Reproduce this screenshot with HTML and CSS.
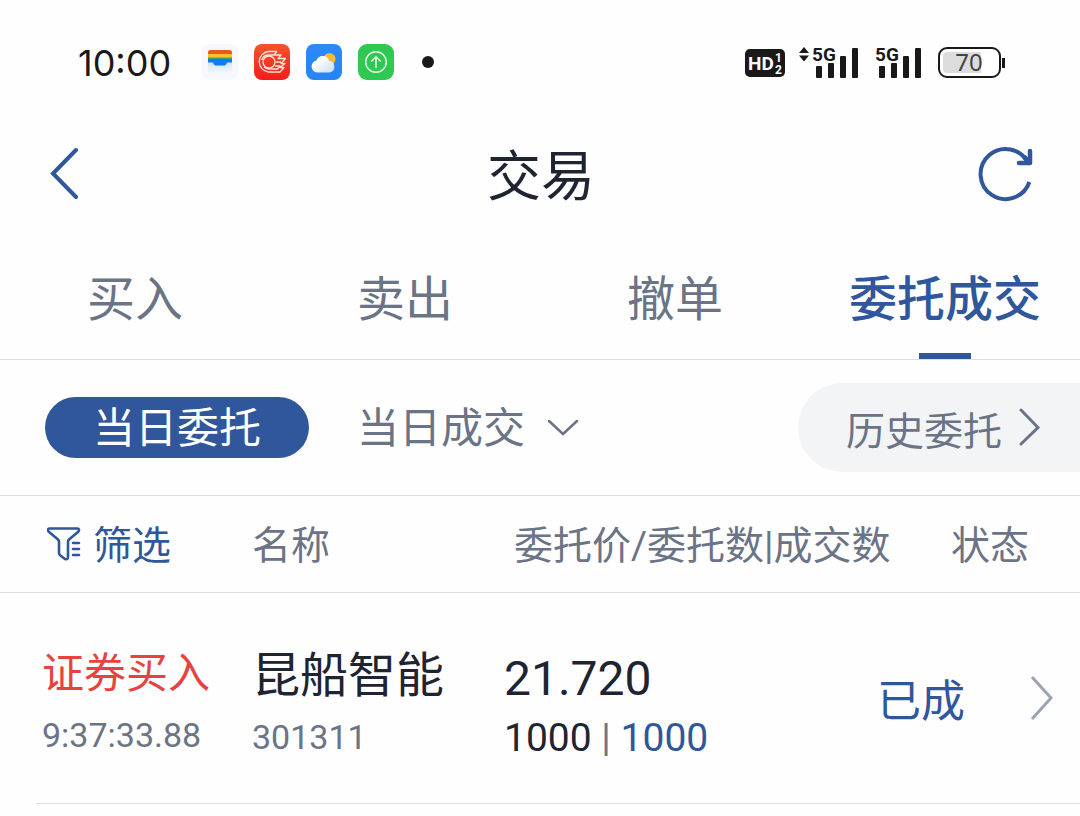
FILE: index.html
```html
<!DOCTYPE html>
<html lang="zh-CN">
<head>
<meta charset="utf-8">
<meta name="viewport" content="width=device-width, initial-scale=1">
<title>交易</title>
<link rel="stylesheet" href="styles.css">
</head>
<body>
<div class="status">
  <time class="clock">10:00</time>
  <div class="apps">
    <svg width="36" height="36" viewBox="0 0 36 36" aria-hidden="true">
      <defs><linearGradient id="fade" x1="0" y1="0" x2="0" y2="1"><stop offset="0" stop-color="#cfe3fb"/><stop offset="1" stop-color="#f7f9fe"/></linearGradient></defs>
      <rect width="36" height="36" rx="8" fill="#f7f8fd"/>
      <path d="M6 17h24v13H6z" fill="url(#fade)"/>
      <path d="M6 11V8.500q0-2.500 2.500-2.500h19q2.500 0 2.500 2.500V11z" fill="#ea5b1a"/>
      <path d="M6 10h24v5H6z" fill="#fbc02a"/>
      <path d="M6 13.500h24V16H6z" fill="#3f9f78"/>
      <path d="M6 15h24v3.500h-4q-1 0-1.500 1l-.5 1q-.500 1-2 1h-8q-1.500 0-2-1l-.5-1q-.5-1-1.500-1H6z" fill="#0d7cf2"/>
    </svg>
    <svg width="36" height="36" viewBox="0 0 36 36" aria-hidden="true">
      <defs><linearGradient id="red" x1="0" y1="0" x2="0" y2="1"><stop offset="0" stop-color="#f4552c"/><stop offset="1" stop-color="#f51d1d"/></linearGradient></defs>
      <rect width="36" height="36" rx="8" fill="url(#red)"/>
      <g fill="none" stroke="#ffe3dc" stroke-width="1.300" stroke-linejoin="round">
        <circle cx="15" cy="18" r="6"/>
        <path d="M23 7.500H14.500A10.300 10.300 0 0 0 14.500 28H26l4-4.500h-4l5-4h-4l4.500-5h-8M23 7.500 20 11h7l-3 3.500M20 11h-5a7.500 7.500 0 0 0-7.300 5M22 18h5M21 22h5l-2.500 3H15a7.500 7.500 0 0 1-5-2"/>
      </g>
    </svg>
    <svg width="36" height="36" viewBox="0 0 36 36" aria-hidden="true">
      <defs><linearGradient id="cloud" x1="0" y1="0" x2="1" y2="1"><stop offset=".3" stop-color="#fff"/><stop offset="1" stop-color="#c5ddfb"/></linearGradient>
      <linearGradient id="sky" x1="0" y1="0" x2="0" y2="1"><stop offset="0" stop-color="#2b8af6"/><stop offset="1" stop-color="#2585f3"/></linearGradient></defs>
      <rect width="36" height="36" rx="8" fill="url(#sky)"/>
      <circle cx="23.500" cy="15" r="6" fill="#f8bd38"/>
      <path d="M11.500 28.500a6 6 0 0 1-1-11.900 6.500 6.500 0 0 1 12.500.4 5.800 5.800 0 0 1 .5 11.500z" fill="url(#cloud)"/>
    </svg>
    <svg width="36" height="36" viewBox="0 0 36 36" aria-hidden="true">
      <rect width="36" height="36" rx="9" fill="#2fc850"/>
      <g fill="none" stroke="#e5ffe9" stroke-width="1.500" stroke-linecap="round" stroke-linejoin="round"><circle cx="18" cy="18" r="10.300"/><path d="M18 23.500V13M13.500 17.200 18 12.700l4.500 4.500"/></g>
    </svg>
    <span class="dot"></span>
  </div>
  <div class="signals">
    <svg width="40" height="28" viewBox="0 0 40 28" role="img" aria-label="HD">
      <rect width="40" height="28" rx="5" fill="#191919"/>
      <g fill="#fff" font-family="Roboto, sans-serif" font-weight="700"><text x="3" y="21" font-size="19">HD</text><text x="30" y="13" font-size="12">1</text><text x="30" y="25" font-size="12">2</text></g>
    </svg>
    <svg class="cell-one" width="60" height="38" viewBox="0 0 60 38" role="img" aria-label="5G">
      <path d="M0 9 5 3l5 6zM0 11.500h10l-5 6z" fill="#191919"/>
      <text x="13" y="17" font-size="19" font-family="Roboto, sans-serif" font-weight="700" fill="#191919">5G</text>
      <g fill="#191919"><rect x="17" y="22" width="6" height="12" rx="1"/><rect x="29" y="19" width="6" height="15" rx="1"/><rect x="41" y="12" width="6" height="22" rx="1"/><rect x="53" y="4" width="6" height="30" rx="1"/></g>
    </svg>
    <svg class="cell-two" width="48" height="38" viewBox="0 0 48 38" role="img" aria-label="5G">
      <text x="0" y="17" font-size="19" font-family="Roboto, sans-serif" font-weight="700" fill="#191919">5G</text>
      <g fill="#191919"><rect x="4" y="22" width="6" height="12" rx="1"/><rect x="16" y="19" width="6" height="15" rx="1"/><rect x="28" y="12" width="6" height="22" rx="1"/><rect x="40" y="4" width="6" height="30" rx="1"/></g>
    </svg>
    <svg class="battery" width="68" height="36" viewBox="0 0 68 36" role="img" aria-label="70%">
      <rect x="1" y="3" width="61" height="29" rx="8" fill="#fff" stroke="#191919" stroke-width="2"/>
      <path d="M9 7h34v21H9q-4 0-4-4V11q0-4 4-4z" fill="#dcdcdc"/>
      <path d="M65.500 13v10" stroke="#191919" stroke-width="3"/>
      <text x="31" y="26" font-size="24" text-anchor="middle" font-family="'Noto Sans', sans-serif" fill="#444">70</text>
    </svg>
  </div>
</div>

<header class="header">
  <button class="icon-button" type="button" aria-label="返回">
    <svg width="30" height="54" viewBox="0 0 30 54" fill="none" stroke="#30569b" stroke-width="4" stroke-linecap="round"><path d="M28 4 5 27.500 28 51"/></svg>
  </button>
  <h1 class="title">交易</h1>
  <button class="icon-button" type="button" aria-label="刷新">
    <svg width="58" height="58" viewBox="0 0 58 58" fill="none" stroke="#30569b" stroke-width="4"><path d="M53.300 38A25 25 0 1 1 52 19"/><path d="M54 7V19H43" stroke-width="4.500" stroke-linecap="round" stroke-linejoin="round"/><path d="m48 12.500 6 7" stroke-width="4.500"/></svg>
  </button>
</header>

<nav class="tabs">
  <a class="tab" href="#buy">买入</a>
  <a class="tab" href="#sell">卖出</a>
  <a class="tab" href="#cancel">撤单</a>
  <a class="tab active" href="#orders" aria-current="page">委托成交</a>
</nav>

<main>
  <div class="views">
    <button class="pill" type="button">当日委托</button>
    <button class="view" type="button">当日成交
      <svg width="32" height="18" viewBox="0 0 32 18" fill="none" stroke="#6b7285" stroke-width="2.500" stroke-linecap="round"><path d="m2 1 14 13L30 1"/></svg>
    </button>
    <a class="history" href="#history">历史委托
      <svg width="22" height="40" viewBox="0 0 22 40" fill="none" stroke="#6b7486" stroke-width="3" stroke-linecap="round"><path d="m3 2 17 17.500L3 36"/></svg>
    </a>
  </div>

  <table class="orders">
    <colgroup><col class="col-action"><col class="col-name"><col class="col-price"><col class="col-state"></colgroup>
    <thead>
      <tr>
        <th class="filter-cell"><button class="filter" type="button">
          <svg width="34" height="38" viewBox="0 0 34 38" fill="none" stroke="#30569b" stroke-width="2.600" stroke-linecap="round" stroke-linejoin="round"><path d="M22 12.500 31.500 4.500q1.500-3-1.500-3H3q-3 0-1.500 3L11 12.500q1 1 1 2.500v11q0 2 2 3l4 3q3 1 3-2V15q0-1.500 1-2.500M26 16h6M26 22h6M26 28h6"/></svg>筛选</button></th>
        <th>名称</th>
        <th class="price-head">委托价/委托数|成交数</th>
        <th class="state-head">状态</th>
      </tr>
    </thead>
    <tbody>
      <tr>
        <td class="action-cell"><div class="action">证券买入</div><div class="small">9:37:33.88</div></td>
        <td><div class="name">昆船智能</div><div class="small">301311</div></td>
        <td><div class="price">21.720</div><div class="amount">1000 <span class="bar">|</span> <span class="filled">1000</span></div></td>
        <td><a class="state" href="#detail">已成
          <svg width="24" height="46" viewBox="0 0 24 46" fill="none" stroke="#9ca3b2" stroke-width="3"><path d="M2 2 21 23 2 44"/></svg></a></td>
      </tr>
    </tbody>
  </table>
  <hr class="row-line">
</main>
</body>
</html>
```
FILE: styles.css
```css
* { box-sizing: border-box; }
body {
  margin: 0;
  background: #fefefe;
  color: #1e2432;
  font-family: Roboto, "Noto Sans CJK SC", sans-serif;
  font-weight: 400;
}
button {
  margin: 0;
  padding: 0;
  border: 0;
  background: none;
  color: inherit;
  font: inherit;
}
a { color: inherit; text-decoration: none; }
svg { display: block; flex: none; }

.status {
  display: flex;
  align-items: center;
  height: 112px;
  padding: 12px 74px 0 78px;
}
.clock {
  width: 124px;
  padding-top: 2px;
  color: #191919;
  font-family: Inter, sans-serif;
  font-size: 36px;
  line-height: 40px;
}
.apps { display: flex; align-items: center; gap: 16px; }
.dot { width: 12px; height: 12px; margin-left: 12px; border-radius: 50%; background: #191919; }
.signals { display: flex; align-items: center; margin-left: auto; padding-top: 2px; }
.cell-one { margin-left: 14px; }
.cell-two { margin: 0 15px 0 16px; }

.header {
  display: flex;
  align-items: center;
  justify-content: space-between;
  height: 126px;
  padding: 0 46px 4px 48px;
}
.icon-button { display: flex; width: 58px; }
.title {
  margin: 0;
  padding-top: 10px;
  font-size: 54px;
  font-weight: 400;
  line-height: 60px;
}

.tabs {
  display: grid;
  grid-template-columns: repeat(4, 1fr);
  border-bottom: 1px solid #dedfe2;
}
.tab {
  position: relative;
  padding: 30px 0 27px;
  color: #6b7486;
  font-size: 48px;
  line-height: 64px;
  text-align: center;
}
.tab.active { color: #30569b; font-weight: 500; }
.tab.active::after {
  content: "";
  position: absolute;
  bottom: 0;
  left: 50%;
  width: 52px;
  height: 6px;
  margin-left: -26px;
  background: #30569b;
}

.views {
  display: flex;
  align-items: center;
  height: 136px;
  padding-left: 45px;
  border-bottom: 1px solid #dedfe2;
  color: #6b7486;
  font-size: 42px;
}
.pill {
  width: 264px;
  height: 61px;
  padding-top: 3px;
  border-radius: 31px;
  background: #30569b;
  color: #fff;
  line-height: 58px;
}
.view {
  display: flex;
  align-items: center;
  gap: 22px;
  margin-left: 48px;
  padding-top: 2px;
  line-height: 60px;
}
.history {
  display: flex;
  align-items: center;
  gap: 16px;
  height: 89px;
  margin-left: auto;
  padding: 0 40px 0 48px;
  border-radius: 45px 0 0 45px;
  background: #f3f4f6;
  font-size: 39px;
}

.orders { width: 100%; border-collapse: separate; border-spacing: 0; table-layout: fixed; }
.col-action { width: 252px; }
.col-name { width: 252px; }
.col-state { width: 203px; }
.orders th {
  height: 97px;
  padding: 4px 0 0;
  border-bottom: 1px solid #dedfe2;
  color: #6b7486;
  font-size: 39px;
  font-weight: 400;
  line-height: 56px;
  text-align: left;
  white-space: nowrap;
}
.orders .filter-cell { padding-left: 47px; }
.filter { display: flex; align-items: center; gap: 12px; color: #30569b; }
.orders .price-head { padding-left: 10px; }
.orders .state-head { padding-left: 74px; }
.orders td { height: 210px; padding: 0; white-space: nowrap; }
.orders .action-cell { padding-left: 42px; }
.action { padding-top: 10px; color: #e64340; font-size: 42px; line-height: 64px; }
.name { padding-top: 14px; font-size: 48px; line-height: 64px; }
.small { color: #6b7486; font-size: 34px; line-height: 58px; }
.price { padding-top: 20px; font-size: 48px; line-height: 60px; }
.amount { font-size: 39px; line-height: 58px; }
.bar { color: #6b7486; }
.filled { color: #30569b; }
.state {
  display: flex;
  align-items: center;
  justify-content: space-between;
  padding-right: 26px;
  color: #30569b;
  font-size: 44px;
}
.row-line { height: 1px; margin: 0 0 0 36px; border: 0; background: #dedfe2; }
```
